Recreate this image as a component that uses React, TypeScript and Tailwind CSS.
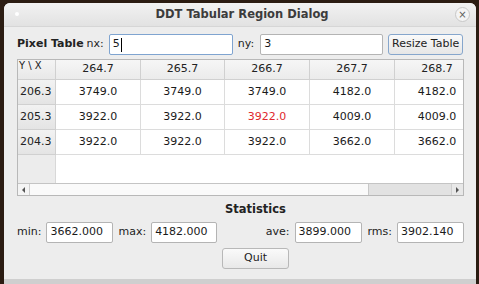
const cols = ['264.7', '265.7', '266.7', '267.7', '268.7']
const colW = [85, 84, 85, 85, 85]

const rows = [
  { y: '206.3', vals: ['3749.0', '3749.0', '3749.0', '4182.0', '4182.0'] },
  { y: '205.3', vals: ['3922.0', '3922.0', '3922.0', '4009.0', '4009.0'] },
  { y: '204.3', vals: ['3922.0', '3922.0', '3922.0', '3662.0', '3662.0'] },
]

function Field({ value, w, focused }: { value: string; w: number; focused?: boolean }) {
  return (
    <div
      className={`h-[21px] shrink-0 bg-white rounded-[2px] border flex items-center px-[3px] text-[11px] text-[#1a1a1a] whitespace-nowrap ${
        focused ? 'border-[#7fa4d0]' : 'border-[#b4b4b4]'
      }`}
      style={{ width: w }}
    >
      {value}
      {focused && <span className="w-px h-[14px] bg-black ml-px" />}
    </div>
  )
}

export default function App() {
  return (
    <div
      className="w-[479px] h-[284px] bg-[#2b1c12] overflow-hidden pt-[3px] pl-[4px]"
      style={{ fontFamily: '"DejaVu Sans", sans-serif' }}
    >
      <div className="w-[472px] h-[281px] bg-[#ededed] rounded-t-[6px] flex flex-col border-b-[5px] border-[#cfcfcf]">
        {/* Title bar */}
        <div className="h-[24px] shrink-0 rounded-t-[6px] bg-gradient-to-b from-[#f2f2f2] to-[#e2e2e2] border-b border-[#d6d6d6] relative flex items-center justify-center">
          <div className="absolute left-[11px] top-[9px] w-[4px] h-[4px] rounded-full bg-white" />
          <span className="text-[11.5px] font-bold text-[#3c3c3c] ml-[4px]">DDT Tabular Region Dialog</span>
          <div className="absolute right-[6px] top-[4px] w-[15px] h-[15px] rounded-full border border-[#c8c8c8] bg-[#f4f4f4] flex items-center justify-center text-[#606060] text-[10px] leading-none">
            ×
          </div>
        </div>

        <div className="flex flex-col pl-[13px] pr-[12px]">
          {/* Pixel Table row */}
          <div className="flex items-center mt-[7px] h-[21px] text-[11px] text-[#222] whitespace-nowrap">
            <span className="font-bold shrink-0">Pixel Table</span>
            <span className="ml-[3px] mr-[5px] shrink-0">nx:</span>
            <Field value="5" w={124} focused />
            <span className="ml-[5px] mr-[6px] shrink-0">ny:</span>
            <Field value="3" w={123} />
            <div className="ml-[5px] h-[21px] w-[75px] shrink-0 rounded-[3px] border border-[#86a6cc] bg-gradient-to-b from-[#fafafa] to-[#e6e6e6] flex items-center justify-center text-[11px]">
              Resize Table
            </div>
          </div>

          {/* Table */}
          <div className="mt-[4px] w-[447px] h-[137px] border border-[#b8b8b8] bg-white flex flex-col overflow-hidden">
            <div className="flex-1 flex overflow-hidden">
              {/* Row header column */}
              <div className="w-[38px] shrink-0 flex flex-col bg-[#ececec]">
                <div className="h-[20px] border-b border-r border-[#d0d0d0] bg-gradient-to-b from-[#f4f4f4] to-[#e8e8e8] text-[10px] pl-px leading-[11px] text-[#222] whitespace-nowrap">
                  Y \ X
                </div>
                {rows.map((r) => (
                  <div
                    key={r.y}
                    className="h-[25px] border-b border-r border-[#d0d0d0] bg-gradient-to-b from-[#f2f2f2] to-[#e4e4e4] flex items-center pl-[2px] text-[11px] text-[#222]"
                  >
                    {r.y}
                  </div>
                ))}
                <div className="flex-1 bg-[#ececec] border-r border-[#d8d8d8]" />
              </div>
              {/* Data columns */}
              <div className="flex-1 flex flex-col">
                <div className="flex h-[20px] shrink-0">
                  {cols.map((c, i) => (
                    <div
                      key={c}
                      className="shrink-0 border-b border-r border-[#d0d0d0] bg-gradient-to-b from-[#f6f6f6] to-[#ebebeb] flex items-center justify-center text-[11px] text-[#222]"
                      style={{ width: colW[i] }}
                    >
                      {c}
                    </div>
                  ))}
                </div>
                {rows.map((r) => (
                  <div key={r.y} className="flex h-[25px] shrink-0">
                    {r.vals.map((v, i) => (
                      <div
                        key={i}
                        className={`shrink-0 border-b border-r border-[#dcdcdc] flex items-center justify-center text-[11px] ${
                          r.y === '205.3' && i === 2 ? 'text-[#e0282e]' : 'text-[#1a1a1a]'
                        }`}
                        style={{ width: colW[i] }}
                      >
                        {v}
                      </div>
                    ))}
                  </div>
                ))}
              </div>
            </div>
            {/* Horizontal scrollbar */}
            <div className="h-[12px] shrink-0 flex border-t border-[#c4c4c4] bg-[#e2e2e2]">
              <div className="w-[12px] flex items-center justify-center bg-[#f4f4f4] border-r border-[#cfcfcf]">
                <div className="w-0 h-0 border-y-[3px] border-y-transparent border-r-[3px] border-r-[#555]" />
              </div>
              <div className="w-[339px] bg-[#fafafa] border-r border-[#c8c8c8]" />
              <div className="flex-1" />
              <div className="w-[12px] flex items-center justify-center bg-[#e8e8e8] border-l border-[#cfcfcf]">
                <div className="w-0 h-0 border-y-[3px] border-y-transparent border-l-[3px] border-l-[#555]" />
              </div>
            </div>
          </div>

          {/* Statistics */}
          <div className="mt-[7px] h-[14px] flex items-center justify-center text-[11.5px] font-bold text-[#222] pl-[30px]">
            Statistics
          </div>
          <div className="mt-[5px] flex items-center h-[21px] text-[11px] text-[#222] whitespace-nowrap">
            <span className="mr-[5px]">min:</span>
            <Field value="3662.000" w={67} />
            <span className="ml-[5px] mr-[5px]">max:</span>
            <Field value="4182.000" w={66} />
            <span className="ml-auto mr-[5px]">ave:</span>
            <Field value="3899.000" w={67} />
            <span className="ml-[6px] mr-[5px]">rms:</span>
            <Field value="3902.140" w={67} />
          </div>
          <div className="mt-[5px] flex justify-center pl-[30px]">
            <div className="h-[21px] w-[67px] rounded-[3px] border border-[#b8b8b8] bg-gradient-to-b from-[#fafafa] to-[#e8e8e8] flex items-center justify-center text-[11px] text-[#222]">
              Quit
            </div>
          </div>
        </div>
      </div>
    </div>
  )
}
